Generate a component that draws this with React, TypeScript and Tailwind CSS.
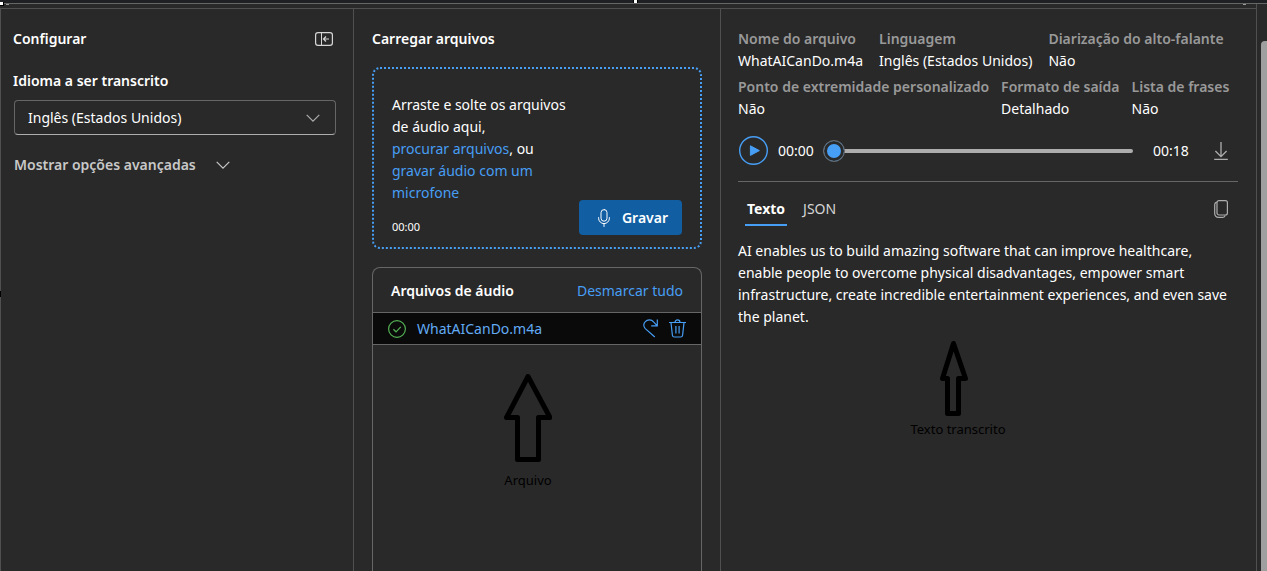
import { useState } from "react";

const details = [
  {
    gap: "gap-4",
    items: [
      { label: "Nome do arquivo", value: "WhatAICanDo.m4a" },
      { label: "Linguagem", value: "Inglês (Estados Unidos)" },
      { label: "Diarização do alto-falante", value: "Não" },
    ],
  },
  {
    gap: "gap-3",
    items: [
      { label: "Ponto de extremidade personalizado", value: "Não" },
      { label: "Formato de saída", value: "Detalhado" },
      { label: "Lista de frases", value: "Não" },
    ],
  },
];

function Chevron({ className = "" }: { className?: string }) {
  return (
    <svg className={className} width="14" height="8" viewBox="0 0 14 8" fill="none" stroke="currentColor" aria-hidden="true">
      <path d="M0.7 0.8 L7 7.1 L13.3 0.8" strokeWidth="1.2" />
    </svg>
  );
}

function SettingsPanel() {
  const [language, setLanguage] = useState("en-US");
  return (
    <section className="border-x border-[#505050] pl-3 pr-[17px] pt-[19px]">
      <div className="flex items-center justify-between pr-[3px]">
        <h2 className="font-semibold">Configurar</h2>
        <button type="button" aria-label="Recolher painel">
          <svg width="18" height="14" viewBox="0 0 18 14" fill="none" stroke="#d6d6d6" aria-hidden="true">
            <rect x="0.6" y="0.6" width="16.8" height="12.8" rx="2.4" strokeWidth="1.2" />
            <path d="M6.5 0.6V13.4" strokeWidth="1" />
            <path d="M14 7H8.8M11 4.5L8.5 7L11 9.5" strokeWidth="1.2" />
          </svg>
        </button>
      </div>
      <label htmlFor="language" className="mt-5 block font-semibold">
        Idioma a ser transcrito
      </label>
      <div className="ml-px mt-2 grid items-center">
        <select
          id="language"
          value={language}
          onChange={(e) => setLanguage(e.target.value)}
          className="col-start-1 row-start-1 h-[35px] w-full appearance-none rounded border border-[#666] border-b-[#adadad] bg-[#292929] px-[13px] outline-none"
        >
          <option value="en-US">Inglês (Estados Unidos)</option>
        </select>
        <Chevron className="pointer-events-none col-start-1 row-start-1 mr-4 justify-self-end text-[#adadad]" />
      </div>
      <button type="button" className="ml-px mt-[19px] flex items-center gap-5 font-semibold text-[#c8c8c8]">
        Mostrar opções avançadas
        <Chevron />
      </button>
    </section>
  );
}

function UploadPanel() {
  return (
    <section className="flex flex-col border-r border-[#505050] pl-[18px] pr-[18px] pt-[19px]">
      <h2 className="font-semibold">Carregar arquivos</h2>
      <div className="mt-[17px] flex items-end justify-between rounded-lg border-2 border-dotted border-[#479ef5] pb-3 pl-[18px] pr-[18px] pt-[25px]">
        <div className="w-[188px]">
          <p>
            Arraste e solte os arquivos de áudio aqui,{" "}
            <a href="#procurar" className="inline-block align-top text-[#479ef5]">procurar arquivos</a>, ou{" "}
            <a href="#gravar" className="inline-block align-top text-[#479ef5]">gravar áudio com um microfone</a>
          </p>
          <p className="mt-[15px] text-[11px] leading-4">00:00</p>
        </div>
        <button type="button" className="flex h-[35px] items-center gap-3 rounded bg-[#115ea3] pl-[19px] pr-[14px] font-semibold">
          <svg width="12" height="18" viewBox="0 0 12 18" fill="none" stroke="#fff" strokeLinecap="round" aria-hidden="true">
            <rect x="3" y="0.6" width="6" height="11.6" rx="3" />
            <path d="M0.6 8.6v0.6a5.4 5.4 0 0 0 10.8 0V8.6M6 14.7V17.5" />
          </svg>
          Gravar
        </button>
      </div>
      <div className="mt-[18px] flex-1 rounded-t-lg border border-b-0 border-[#666]">
        <div className="flex h-11 items-center justify-between pl-[18px] pr-[18px] pt-[2px]">
          <h3 className="font-semibold">Arquivos de áudio</h3>
          <button type="button" className="text-[#479ef5]">Desmarcar tudo</button>
        </div>
        <div className="flex h-[33px] items-center border-y border-[#666] bg-[#0a0a0a] pl-[15px] pr-[15px]">
          <svg width="18" height="18" viewBox="0 0 18 18" fill="none" stroke="#54b054" aria-hidden="true">
            <circle cx="9" cy="9" r="8.4" strokeWidth="1.2" />
            <path d="M5.4 9.3L8 11.8L12.8 6.8" strokeWidth="1.2" />
          </svg>
          <a href="#arquivo" className="ml-[11px] flex-1 text-[#62abf5]">WhatAICanDo.m4a</a>
          <button type="button" aria-label="Repetir" className="mr-[11px]">
            <svg width="15" height="19" viewBox="0 0 15 19" fill="none" stroke="#479ef5" strokeWidth="1.2" aria-hidden="true">
              <path d="M14.3 0.4V6.9H8.2M14 6.6L10.6 2.9A5.6 5.6 0 0 0 2.3 2.6A4.8 4.8 0 0 0 2.3 9.6L11.8 18" />
            </svg>
          </button>
          <button type="button" aria-label="Excluir">
            <svg width="17" height="19" viewBox="0 0 17 19" fill="none" stroke="#479ef5" strokeWidth="1.2" aria-hidden="true">
              <path d="M0 3.5H17M6 3.4a2.5 2.5 0 0 1 5 0M2 3.6L3.4 16.2a2 2 0 0 0 2 1.8H11.6a2 2 0 0 0 2-1.8L15 3.6M6.9 7V14.4M10.1 7V14.4" />
            </svg>
          </button>
        </div>
        <figure className="flex flex-col items-center pr-[18px] pt-7">
          <svg width="48" height="90" viewBox="0 0 48 90" fill="none" stroke="#000" strokeWidth="5" strokeLinejoin="round" aria-hidden="true">
            <path d="M24 3.5L46 44.5H34.5V86.5H13.5V44.5H2.5Z" />
          </svg>
          <figcaption className="mt-[6px] text-[13px] text-black">Arquivo</figcaption>
        </figure>
      </div>
    </section>
  );
}

function ResultPanel() {
  const [position, setPosition] = useState(0);
  return (
    <section className="min-w-0 border-r border-[#505050] pl-[17px] pr-[18px] pt-[19px]">
      <div className="flex flex-col gap-1">
        {details.map((row) => (
          <dl key={row.gap} className={`flex whitespace-nowrap ${row.gap}`}>
            {row.items.map((d) => (
              <div key={d.label}>
                <dt className="font-semibold text-[#999]">{d.label}</dt>
                <dd>{d.value}</dd>
              </div>
            ))}
          </dl>
        ))}
      </div>
      <div className="flex h-[62px] items-center border-b border-[#666] pl-px pr-[10px]">
        <button type="button" aria-label="Reproduzir">
          <svg width="29" height="29" viewBox="0 0 29 29" fill="none" aria-hidden="true">
            <circle cx="14.5" cy="14.5" r="13.8" stroke="#479ef5" strokeWidth="1.4" />
            <path d="M11.4 9.8V19.4L20.4 14.6Z" fill="#479ef5" stroke="#479ef5" strokeLinejoin="round" />
          </svg>
        </button>
        <span className="ml-[10px] w-9">00:00</span>
        <input
          type="range"
          aria-label="Posição do áudio"
          min={0}
          max={18}
          value={position}
          onChange={(e) => setPosition(Number(e.target.value))}
          className="ml-[9px] mr-5 h-[22px] min-w-0 flex-1 appearance-none bg-transparent [&::-webkit-slider-runnable-track]:h-1 [&::-webkit-slider-runnable-track]:rounded-full [&::-webkit-slider-runnable-track]:bg-[#adadad] [&::-webkit-slider-thumb]:-mt-[9px] [&::-webkit-slider-thumb]:size-[22px] [&::-webkit-slider-thumb]:appearance-none [&::-webkit-slider-thumb]:rounded-full [&::-webkit-slider-thumb]:border [&::-webkit-slider-thumb]:border-[#666] [&::-webkit-slider-thumb]:bg-[#479ef5] [&::-webkit-slider-thumb]:shadow-[inset_0_0_0_3px_#292929]"
        />
        <span className="w-9">00:18</span>
        <button type="button" aria-label="Baixar" className="ml-[25px]">
          <svg width="14" height="18" viewBox="0 0 14 18" fill="none" stroke="#adadad" strokeWidth="1.3" aria-hidden="true">
            <path d="M7 0V14.4M1.4 9L7 14.6L12.6 9M0.2 17.3H13.8" />
          </svg>
        </button>
      </div>
      <div className="flex items-center justify-between pl-[7px] pr-[10px] pt-4">
        <div role="tablist" className="flex gap-4">
          <button type="button" role="tab" aria-selected="true" className="border-b-2 border-[#479ef5] px-[2px] pb-1 font-bold">
            Texto
          </button>
          <button type="button" role="tab" aria-selected="false" className="border-b-2 border-transparent pb-1 text-[#d6d6d6]">
            JSON
          </button>
        </div>
        <button type="button" aria-label="Copiar" className="mb-[7px]">
          <svg width="14" height="18" viewBox="0 0 14 18" fill="none" stroke="#adadad" strokeWidth="1.2" aria-hidden="true">
            <rect x="3" y="0.6" width="10.4" height="14.4" rx="2" />
            <path d="M2.8 2.2C1.4 2.5 0.7 3.4 0.7 4.6V13.6A3.7 3.7 0 0 0 4.4 17.3H8.8C10 17.3 10.9 16.6 11.2 15.3" />
          </svg>
        </button>
      </div>
      <p className="mt-[14px]">
        AI enables us to build amazing software that can improve healthcare, enable people to overcome physical
        disadvantages, empower smart infrastructure, create incredible entertainment experiences, and even save the
        planet.
      </p>
      <figure className="flex w-[440px] flex-col items-center pt-3">
        <svg className="mr-2" width="28" height="76" viewBox="0 0 28 76" fill="none" stroke="#000" strokeWidth="5" strokeLinejoin="round" aria-hidden="true">
          <path d="M13.5 3.5L25.5 38.5H18.5V73.5H7.5V38.5H2.5Z" />
        </svg>
        <figcaption className="mt-[2px] text-[13px] text-black">Texto transcrito</figcaption>
      </figure>
    </section>
  );
}

export default function App() {
  return (
    <div className="relative flex min-h-screen flex-col bg-[#292929] font-['Noto_Sans',sans-serif] text-[14px] leading-[22px] text-white">
      <div className="h-1 border-b border-[#666] bg-[#1f2023]" />
      <div className="mr-[10px] h-[5px] border-b border-r border-[#505050]" />
      <main className="mr-[10px] grid flex-1 grid-cols-[354px_367px_minmax(0,1fr)]">
        <SettingsPanel />
        <UploadPanel />
        <ResultPanel />
      </main>
      <div className="absolute bottom-0 right-0 top-[41px] w-[6px] rounded-tl bg-[#9f9f9f]" />
      <div className="absolute left-0 top-[2px] h-1 w-1 border-b border-r border-black bg-white" />
      <div className="absolute left-[6px] top-1 h-px w-[3px] bg-[#999]" />
      <div className="absolute right-[21px] top-1 h-px w-[3px] bg-[#999]" />
      <div className="absolute left-1/2 top-0 -ml-px h-[3px] w-[5px] border-x border-black bg-white" />
      <div className="absolute left-0 top-[291px] h-[6px] w-px bg-black" />
    </div>
  );
}
